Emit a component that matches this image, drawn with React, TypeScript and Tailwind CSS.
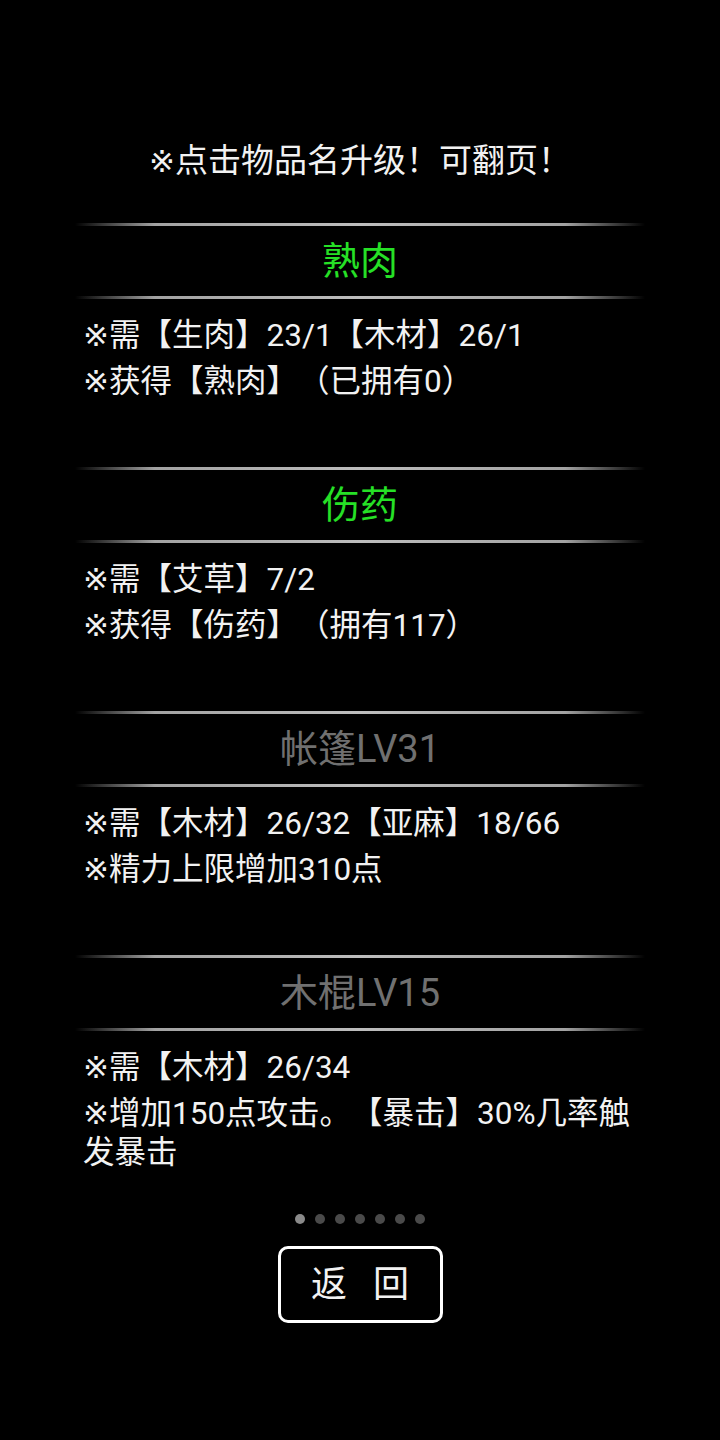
import React from "react";

const font = { fontFamily: "Roboto, 'Noto Sans CJK SC', sans-serif" };

type Item = { title: string; green: boolean; lines: string[] };

const items: Item[] = [
  { title: "熟肉", green: true, lines: ["需【生肉】23/1【木材】26/1", "获得【熟肉】（已拥有0）"] },
  { title: "伤药", green: true, lines: ["需【艾草】7/2", "获得【伤药】（拥有117）"] },
  { title: "帐篷LV31", green: false, lines: ["需【木材】26/32【亚麻】18/66", "精力上限增加310点"] },
  { title: "木棍LV15", green: false, lines: ["需【木材】26/34", "增加150点攻击。【暴击】30%几率触发暴击"] },
];

function Mark() {
  return <span className="[font-family:'DejaVu_Sans',sans-serif] text-[31px] leading-none">※</span>;
}

function Sep() {
  return (
    <div className="h-[3px] w-full bg-[linear-gradient(to_right,rgba(180,180,180,0)_0%,rgba(180,180,180,0.9)_14%,#bdbdbd_50%,rgba(180,180,180,0.9)_86%,rgba(180,180,180,0)_100%)]" />
  );
}

export default function App() {
  return (
    <div className="min-h-[1440px] w-[720px] bg-black text-[#f2f2f2] [text-spacing-trim:space-all]" style={font}>
      <div className="h-[180px] pt-[141px] text-center text-[33px] leading-[39px]">
        <Mark />点击物品名升级！可翻页！
      </div>
      <div className="mx-auto mt-[43px] flex w-[570px] flex-col gap-[66px]">
        {items.map((it) => (
          <div key={it.title} className="flex flex-col">
            <Sep />
            <div
              className={
                "flex h-[70px] items-center justify-center text-[38px] " +
                (it.green ? "text-[#26e026]" : "text-[#707070]")
              }
            >
              {it.title}
            </div>
            <Sep />
            <div className="flex flex-col gap-[7px] pl-[8px] pt-[17px] text-[31.5px] leading-[39px]">
              {it.lines.map((l) => (
                <div key={l}>
                  <Mark />
                  {l}
                </div>
              ))}
            </div>
          </div>
        ))}
      </div>
      <div className="mt-[42px] flex justify-center gap-[10px]">
        {[0, 1, 2, 3, 4, 5, 6].map((i) => (
          <div key={i} className={"h-[10px] w-[10px] rounded-full " + (i === 0 ? "bg-[#8a8a8a]" : "bg-[#4a4a4a]")} />
        ))}
      </div>
      <div className="mt-[22px] flex justify-center">
        <div className="flex h-[77px] w-[165px] items-center justify-center rounded-[10px] border-[3px] border-white pl-[26px] text-[36px] tracking-[26px]">
          返回
        </div>
      </div>
    </div>
  );
}
